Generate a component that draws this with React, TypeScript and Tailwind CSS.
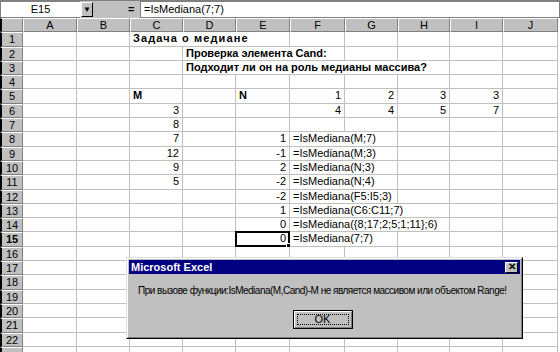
import React from "react";

type Cell = { t: string; r?: boolean; b?: boolean; span?: number; wide?: boolean };

const cols = ["A", "B", "C", "D", "E", "F", "G", "H", "I", "J"];

// строки листа: индекс колонки -> содержимое ячейки
const sheet: Record<number, Record<number, Cell>> = {
  1: { 2: { t: "Задача о медиане", b: true, span: 3, wide: true } },
  2: { 3: { t: "Проверка элемента Cand:", b: true, span: 3 } },
  3: { 3: { t: "Подходит ли он на роль медианы массива?", b: true, span: 5 } },
  5: {
    2: { t: "M", b: true },
    4: { t: "N", b: true },
    5: { t: "1", r: true },
    6: { t: "2", r: true },
    7: { t: "3", r: true },
    8: { t: "3", r: true },
  },
  6: {
    2: { t: "3", r: true },
    5: { t: "4", r: true },
    6: { t: "4", r: true },
    7: { t: "5", r: true },
    8: { t: "7", r: true },
  },
  7: { 2: { t: "8", r: true } },
  8: { 2: { t: "7", r: true }, 4: { t: "1", r: true }, 5: { t: "=IsMediana(M;7)", span: 2 } },
  9: { 2: { t: "12", r: true }, 4: { t: "-1", r: true }, 5: { t: "=IsMediana(M;3)", span: 2 } },
  10: { 2: { t: "9", r: true }, 4: { t: "2", r: true }, 5: { t: "=IsMediana(N;3)", span: 2 } },
  11: { 2: { t: "5", r: true }, 4: { t: "-2", r: true }, 5: { t: "=IsMediana(N;4)", span: 2 } },
  12: { 4: { t: "-2", r: true }, 5: { t: "=IsMediana(F5:I5;3)", span: 2 } },
  13: { 4: { t: "1", r: true }, 5: { t: "=IsMediana(C6:C11;7)", span: 3 } },
  14: { 4: { t: "0", r: true }, 5: { t: "=IsMediana({8;17;2;5;1;11};6)", span: 3 } },
  15: { 4: { t: "0", r: true }, 5: { t: "=IsMediana(7;7)", span: 2 } },
};

const rows = Array.from({ length: 23 }, (_, i) => i + 1);

function SheetRow({ n }: { n: number }) {
  const spec = sheet[n] || {};
  const out: React.ReactNode[] = [];
  let c = 0;
  while (c < 10) {
    const cell = spec[c];
    const span = cell?.span || 1;
    const selected = n === 15 && c === 4;
    out.push(
      <div
        key={c}
        style={span > 1 ? { gridColumn: `span ${span}` } : undefined}
        className={`relative border-r border-b border-[#c0c0c0] bg-white whitespace-nowrap leading-[13px] ${
          cell?.r ? "text-right pr-[3px]" : "pl-[3px]"
        } ${cell?.b ? "font-bold" : ""} ${cell?.wide ? "tracking-[1.1px]" : ""}`}
      >
        {selected && (
          <div className="absolute -left-px -top-px -right-px -bottom-px border-2 border-black">
            <div className="absolute -right-[3px] -bottom-[3px] w-[5px] h-[5px] bg-black border border-white" />
          </div>
        )}
        <span className="relative">{cell?.t}</span>
      </div>
    );
    c += span;
  }
  return (
    <>
      <div
        className={`border-l-2 border-l-black border-t border-t-white border-r border-r-[#808080] border-b border-b-[#808080] bg-[#c0c0c0] text-center leading-[12px] ${
          n === 15 ? "font-bold" : ""
        }`}
      >
        {n < 23 ? n : ""}
      </div>
      {out}
    </>
  );
}

export default function App() {
  return (
    <div className="relative w-[560px] h-[352px] overflow-hidden bg-white text-[11px] text-black font-['Liberation_Sans',Arial,sans-serif]">
      {/* строка формул */}
      <div className="flex h-[18px] border-t border-[#808080] bg-[#c0c0c0]">
        <div className="w-[81px] bg-white border border-[#808080] border-r-white text-center leading-[15px]">E15</div>
        <div className="w-[12px] my-px bg-[#c0c0c0] border border-white border-r-black border-b-black flex items-center justify-center text-[8px]">▼</div>
        <div className="w-[35px]" />
        <div className="w-[12px] font-bold leading-[16px]">=</div>
        <div className="flex-1 bg-white border border-[#808080] leading-[15px] pl-[3px]">=IsMediana(7;7)</div>
      </div>

      {/* лист */}
      <div className="grid grid-cols-[23px_54px_53px_53px_53px_54px_55px_53px_52px_53px_55px] auto-rows-[14.3px]">
        <div className="border-l-2 border-l-black border-t border-t-white border-r border-r-[#808080] border-b border-b-[#808080] bg-[#c0c0c0]" />
        {cols.map((l) => (
          <div
            key={l}
            className="border-t border-t-white border-l border-l-white border-r border-r-[#808080] border-b border-b-[#808080] bg-[#c0c0c0] text-center leading-[12px]"
          >
            {l}
          </div>
        ))}
        {rows.map((n) => (
          <SheetRow key={n} n={n} />
        ))}
      </div>

      {/* диалог */}
      <div className="absolute left-[126px] top-[257px] w-[397px] h-[82px] bg-[#c0c0c0] border border-t-[#dfdfdf] border-l-[#dfdfdf] border-r-black border-b-black">
        <div className="h-full border border-t-white border-l-white border-r-[#808080] border-b-[#808080] p-px flex flex-col">
          <div className="h-[14px] bg-[#000080] flex items-center justify-between pl-[2px] pr-[2px]">
            <span className="text-white font-bold text-[11px] leading-[12px]">Microsoft Excel</span>
            <div className="w-[13px] h-[11px] bg-[#c0c0c0] border border-t-white border-l-white border-r-black border-b-black flex items-center justify-center text-[10px] font-bold leading-none">
              ✕
            </div>
          </div>
          <div className="pl-[9px] pt-[11px] text-[10px] tracking-[-0.5px] whitespace-nowrap leading-[12px]">
            При вызове функции:IsMediana(M,Cand)-M не является массивом или объектом Range!
          </div>
          <div className="flex justify-center mt-[13px] mr-[4px]">
            <div className="w-[60px] h-[19px] border border-black">
              <div className="h-full border border-t-white border-l-white border-r-[#808080] border-b-[#808080] p-[2px]">
                <div className="h-full border border-dotted border-black flex items-center justify-center leading-none">OK</div>
              </div>
            </div>
          </div>
        </div>
      </div>
    </div>
  );
}
